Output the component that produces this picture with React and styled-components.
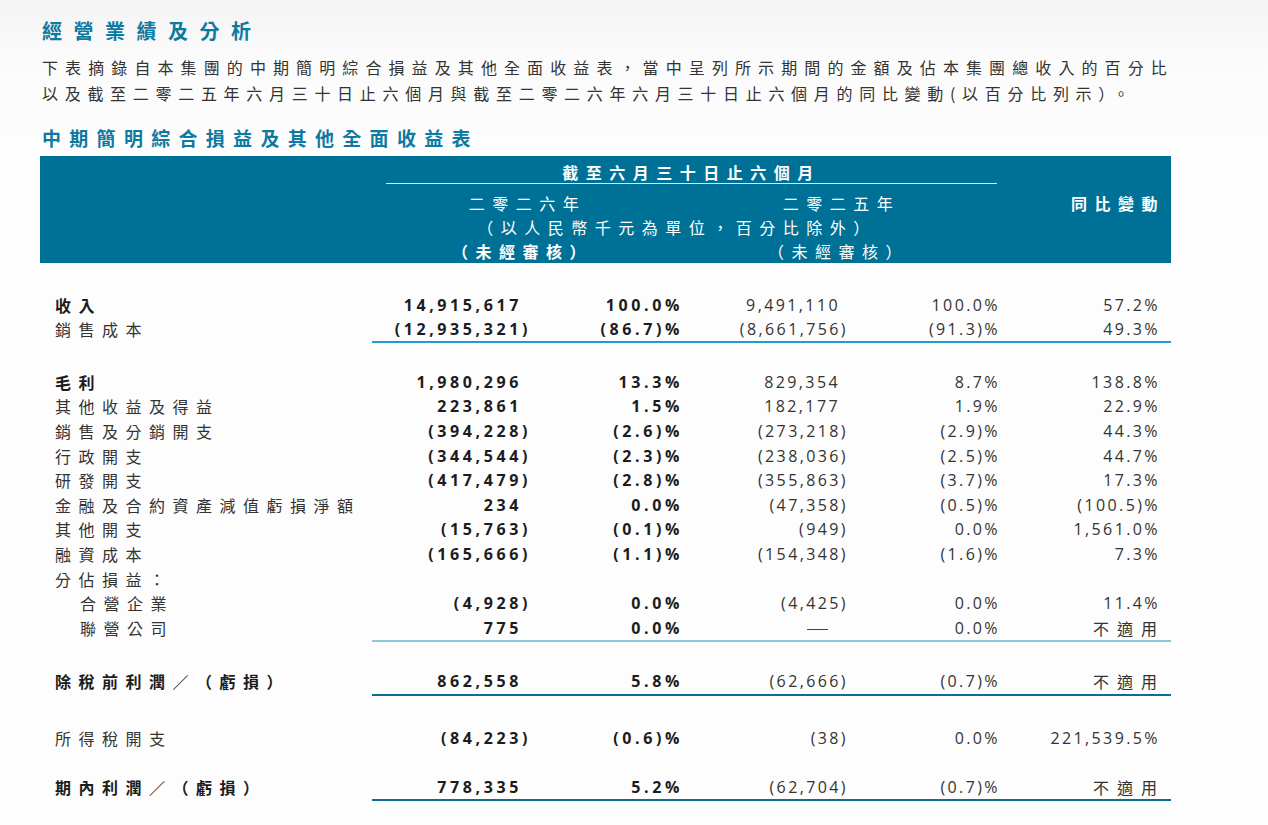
import React from "react";
import styled, { createGlobalStyle } from "styled-components";

const GlobalStyle = createGlobalStyle`
  html, body {
    margin: 0;
    padding: 0;
    background: #fdfdfd;
  }
  body {
    font-family: "Noto Sans CJK TC", "Noto Sans", sans-serif;
    color: #2b2b2b;
  }
`;

const COLS = "332px 159px 152px 165px 152px 160px 11px";

const Page = styled.div`
  width: 1268px;
  min-height: 825px;
  box-sizing: border-box;
  padding: 19px 0 0 40px;
  background: linear-gradient(180deg, #f4f4f4 0px, #fbfbfb 60px, #fdfdfd 140px);
`;

const Title = styled.h1`
  margin: 0 0 0 2px;
  font-size: 20px;
  line-height: 24px;
  font-weight: 700;
  letter-spacing: 11.5px;
  color: #0d7aa2;
`;

const Intro = styled.p`
  margin: 11px 0 0 2px;
  font-size: 16px;
  line-height: 26px;
  color: #333;
  white-space: nowrap;
`;

const IntroLine = styled.span`
  display: block;
  letter-spacing: ${(p) => p.$ls}px;
`;

const SubTitle = styled.h2`
  margin: 20px 0 0 2px;
  font-size: 19px;
  line-height: 24px;
  font-weight: 700;
  letter-spacing: 8.3px;
  color: #0d7aa2;
`;

const Table = styled.div`
  width: 1131px;
  margin-top: 6px;
`;

const Head = styled.div`
  background: #007196;
  color: #fff;
  display: grid;
  grid-template-columns: ${COLS};
  grid-template-rows: 22px 7px 24px 24px 24px;
  padding-top: 6px;
  height: 107px;
  box-sizing: border-box;
  font-size: 16px;
  letter-spacing: 7.5px;
`;

const Period = styled.div`
  grid-column: 2 / 6;
  grid-row: 1;
  margin: 0 3px 0 14px;
  border-bottom: 1px solid rgba(255, 255, 255, 0.85);
  text-align: center;
  font-weight: 700;
  line-height: 21px;
`;

const HeadCell = styled.div`
  grid-row: ${(p) => p.$row};
  grid-column: ${(p) => p.$col};
  text-align: ${(p) => p.$align || "center"};
  font-weight: ${(p) => (p.$bold ? 700 : 400)};
  line-height: 24px;
  padding-right: ${(p) => p.$pr || 0}px;
  margin-right: ${(p) => p.$mr || 0}px;
`;

const Body = styled.div`
  padding-top: 30px;
`;

const Group = styled.div`
  margin-top: ${(p) => p.$gap || 0}px;
`;

const Row = styled.div`
  display: grid;
  grid-template-columns: ${COLS};
  height: ${(p) => p.$h || 24.6}px;
  align-items: center;
`;

const Label = styled.div`
  padding-left: ${(p) => (p.$indent ? 40 : 15)}px;
  font-size: 16px;
  letter-spacing: 7.5px;
  font-weight: ${(p) => (p.$bold ? 700 : 400)};
  color: ${(p) => (p.$bold ? "#1c1c1c" : "#333")};
  white-space: nowrap;
`;

const Num = styled.div`
  text-align: right;
  font-family: "Open Sans", "Noto Sans", sans-serif;
  font-size: 16px;
  font-weight: ${(p) => (p.$bold ? 700 : 400)};
  letter-spacing: ${(p) => (p.$bold ? 3.6 : 2.4)}px;
  color: ${(p) => (p.$bold ? "#1c1c1c" : "#333")};
  padding-right: ${(p) => (p.$hang ? (p.$bold ? 9 : 8) : 0)}px;
  white-space: nowrap;
`;

const NotApplicable = styled.span`
  font-family: "Noto Sans CJK TC", sans-serif;
  letter-spacing: 8px;
  margin-right: -5px;
`;

const Dash = styled.span`
  display: inline-block;
  width: 21px;
  border-top: 1px solid #444;
  vertical-align: middle;
  margin-right: 12px;
`;

const Rule = styled.div`
  display: grid;
  grid-template-columns: ${COLS};
  &::after {
    content: "";
    grid-column: 2 / -1;
    height: ${(p) => p.$w || 1.5}px;
    background: ${(p) => p.$color};
  }
`;

const top = [
  { label: "收入", bold: true, v: ["14,915,617", "100.0%", "9,491,110", "100.0%", "57.2%"] },
  { label: "銷售成本", v: ["(12,935,321)", "(86.7)%", "(8,661,756)", "(91.3)%", "49.3%"] },
];

const middle = [
  { label: "毛利", bold: true, v: ["1,980,296", "13.3%", "829,354", "8.7%", "138.8%"] },
  { label: "其他收益及得益", v: ["223,861", "1.5%", "182,177", "1.9%", "22.9%"] },
  { label: "銷售及分銷開支", v: ["(394,228)", "(2.6)%", "(273,218)", "(2.9)%", "44.3%"] },
  { label: "行政開支", v: ["(344,544)", "(2.3)%", "(238,036)", "(2.5)%", "44.7%"] },
  { label: "研發開支", v: ["(417,479)", "(2.8)%", "(355,863)", "(3.7)%", "17.3%"] },
  { label: "金融及合約資產減值虧損淨額", v: ["234", "0.0%", "(47,358)", "(0.5)%", "(100.5)%"] },
  { label: "其他開支", v: ["(15,763)", "(0.1)%", "(949)", "0.0%", "1,561.0%"] },
  { label: "融資成本", v: ["(165,666)", "(1.1)%", "(154,348)", "(1.6)%", "7.3%"] },
  { label: "分佔損益：", v: ["", "", "", "", ""] },
  { label: "合營企業", indent: true, v: ["(4,928)", "0.0%", "(4,425)", "0.0%", "11.4%"] },
  { label: "聯營公司", indent: true, v: ["775", "0.0%", "—", "0.0%", "不適用"] },
];

const renderValue = (val) => {
  if (val === "不適用") return <NotApplicable>{val}</NotApplicable>;
  if (val === "—") return <Dash aria-label="—" />;
  return val;
};

const DataRow = ({ row, h }) => (
  <Row $h={h}>
    <Label $bold={row.bold} $indent={row.indent}>
      {row.label}
    </Label>
    {row.v.map((val, i) => {
      const isAmount = i === 0 || i === 2;
      const hang = isAmount && val !== "" && val !== "—" && !val.endsWith(")");
      return (
        <Num key={i} $bold={i < 2} $hang={hang || val === "—"}>
          {renderValue(val)}
        </Num>
      );
    })}
    <div />
  </Row>
);

export default function App() {
  return (
    <>
      <GlobalStyle />
      <Page lang="zh-TW">
        <Title>經營業績及分析</Title>
        <Intro>
          <IntroLine $ls={7.1}>
            下表摘錄自本集團的中期簡明綜合損益及其他全面收益表，當中呈列所示期間的金額及佔本集團總收入的百分比
          </IntroLine>
          <IntroLine $ls={6.7}>
            以及截至二零二五年六月三十日止六個月與截至二零二六年六月三十日止六個月的同比變動(以百分比列示）。
          </IntroLine>
        </Intro>
        <SubTitle>中期簡明綜合損益及其他全面收益表</SubTitle>

        <Table>
          <Head>
            <Period>截至六月三十日止六個月</Period>
            <HeadCell $row={3} $col="2 / 4">二零二六年</HeadCell>
            <HeadCell $row={3} $col="4 / 6">二零二五年</HeadCell>
            <HeadCell $row={3} $col="6 / 7" $align="right" $bold $mr={-5}>
              同比變動
            </HeadCell>
            <HeadCell $row={4} $col="2 / 6" $pr={18}>
              （以人民幣千元為單位，百分比除外）
            </HeadCell>
            <HeadCell $row={5} $col="2 / 4" $bold $pr={10}>
              （未經審核）
            </HeadCell>
            <HeadCell $row={5} $col="4 / 6" $pr={6}>
              （未經審核）
            </HeadCell>
          </Head>

          <Body>
            <Group>
              {top.map((r) => (
                <DataRow key={r.label} row={r} h={24} />
              ))}
              <Rule $color="#1e9fc9" />
            </Group>

            <Group $gap={27}>
              {middle.map((r) => (
                <DataRow key={r.label} row={r} />
              ))}
              <Rule $color="#8ec6d7" $w={2} />
            </Group>

            <Group $gap={27}>
              <DataRow
                row={{
                  label: "除稅前利潤／（虧損）",
                  bold: true,
                  v: ["862,558", "5.8%", "(62,666)", "(0.7)%", "不適用"],
                }}
              />
              <Rule $color="#0b6f94" $w={2.5} />
            </Group>

            <Group $gap={29.5}>
              <DataRow
                row={{
                  label: "所得稅開支",
                  v: ["(84,223)", "(0.6)%", "(38)", "0.0%", "221,539.5%"],
                }}
              />
            </Group>

            <Group $gap={24}>
              <DataRow
                row={{
                  label: "期內利潤／（虧損）",
                  bold: true,
                  v: ["778,335", "5.2%", "(62,704)", "(0.7)%", "不適用"],
                }}
              />
              <Rule $color="#0b6f94" $w={2.5} />
            </Group>
          </Body>
        </Table>
      </Page>
    </>
  );
}
